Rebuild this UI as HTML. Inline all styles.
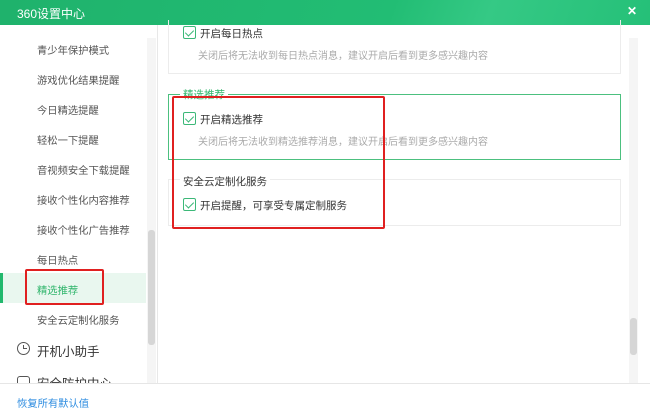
<!DOCTYPE html>
<html><head><meta charset="utf-8"><style>
*{margin:0;padding:0;box-sizing:border-box}
body{width:650px;height:416px;overflow:hidden;background:#fff;font-family:"Liberation Sans","Noto Sans CJK SC",sans-serif;position:relative;font-size:10.5px;color:#333}
.a{position:absolute;white-space:nowrap}
.title{left:0;top:0;width:650px;height:25px;background:linear-gradient(110deg,#1fb26c 0%,#22bd74 60%,#35c985 75%,#25c078 100%);}
.cb{position:absolute;width:13px;height:13px;border:1px solid #3cb878;border-radius:2px;background:#fff}
.cb:after{content:"";position:absolute;left:3px;top:1px;width:4px;height:7px;border:solid #3cb878;border-width:0 1.3px 1.3px 0;transform:rotate(45deg)}
.side{color:#555;font-size:10.3px}
.d{color:#aaa;font-size:10px}
</style></head><body>
<div class="a title"></div>
<div class="a" style="left:17px;top:5px;color:#fff;font-size:12px">360设置中心</div>
<div class="a" style="left:627px;top:4px;color:#fff;font-size:12px;font-weight:bold">✕</div>

<div class="a" style="left:157px;top:25px;width:1px;height:358px;background:#e8e8e8"></div>
<div class="a" style="left:147px;top:38px;width:9px;height:345px;background:#f5f5f5"></div>
<div class="a" style="left:148px;top:230px;width:7px;height:115px;background:#d6d6d6;border-radius:3px"></div>

<div class="a side" style="left:37px;top:42px">青少年保护模式</div>
<div class="a side" style="left:37px;top:72px">游戏优化结果提醒</div>
<div class="a side" style="left:37px;top:102px">今日精选提醒</div>
<div class="a side" style="left:37px;top:132px">轻松一下提醒</div>
<div class="a side" style="left:37px;top:162px">音视频安全下载提醒</div>
<div class="a side" style="left:37px;top:192px">接收个性化内容推荐</div>
<div class="a side" style="left:37px;top:222px">接收个性化广告推荐</div>
<div class="a side" style="left:37px;top:252px">每日热点</div>
<div class="a" style="left:0;top:273px;width:146px;height:30px;background:#e9f7ef"></div>
<div class="a" style="left:0;top:273px;width:3px;height:30px;background:#22b86d"></div>
<div class="a" style="left:37px;top:282px;color:#2fb56b;font-size:10.3px">精选推荐</div>
<div class="a" style="left:25px;top:269px;width:79px;height:36px;border:2px solid #e02020;border-radius:2px"></div>
<div class="a side" style="left:37px;top:312px">安全云定制化服务</div>
<div class="a" style="left:17px;top:342px;width:13px;height:13px;border:1.3px solid #555;border-radius:50%"></div>
<div class="a" style="left:23px;top:345px;width:4px;height:4px;border-left:1.2px solid #555;border-bottom:1.2px solid #555"></div>
<div class="a" style="left:37px;top:341px;font-size:12.5px;color:#333">开机小助手</div>
<div class="a" style="left:17px;top:376px;width:13px;height:13px;border:1.3px solid #555;border-radius:3px"></div>
<div class="a" style="left:37px;top:373px;font-size:12.5px;color:#333">安全防护中心</div>

<div class="a" style="left:168px;top:20px;width:453px;height:54px;border:1px solid #ececec;border-top:none"></div>
<div class="cb" style="left:183px;top:26px"></div>
<div class="a" style="left:200px;top:26px">开启每日热点</div>
<div class="a d" style="left:198px;top:47px">关闭后将无法收到每日热点消息，建议开启后看到更多感兴趣内容</div>

<div class="a" style="left:168px;top:94px;width:453px;height:66px;border:1px solid #4cc07f"></div>
<div class="a" style="left:180px;top:87px;background:#fff;padding:0 3px;color:#2fb56b">精选推荐</div>
<div class="cb" style="left:183px;top:112px"></div>
<div class="a" style="left:200px;top:112px">开启精选推荐</div>
<div class="a d" style="left:198px;top:133px">关闭后将无法收到精选推荐消息，建议开启后看到更多感兴趣内容</div>

<div class="a" style="left:168px;top:179px;width:453px;height:47px;border:1px solid #ececec"></div>
<div class="a" style="left:180px;top:174px;background:#fff;padding:0 3px;color:#333">安全云定制化服务</div>
<div class="cb" style="left:183px;top:198px"></div>
<div class="a" style="left:200px;top:198px">开启提醒，可享受专属定制服务</div>

<div class="a" style="left:172px;top:96px;width:213px;height:133px;border:2px solid #e02020;border-radius:2px"></div>

<div class="a" style="left:629px;top:38px;width:9px;height:345px;background:#f5f5f5"></div>
<div class="a" style="left:630px;top:318px;width:7px;height:37px;background:#d6d6d6;border-radius:3px"></div>

<div class="a" style="left:0;top:383px;width:650px;height:33px;background:#fff;border-top:1px solid #e6e6e6"></div>
<div class="a" style="left:17px;top:395px;color:#2f8de0;font-size:10.3px">恢复所有默认值</div>
</body></html>
